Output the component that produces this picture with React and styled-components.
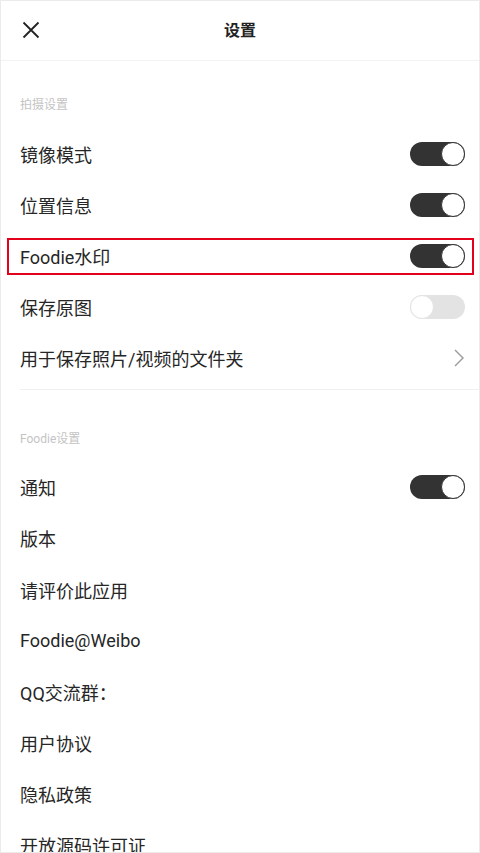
import React, {useState} from "react";
import styled, {createGlobalStyle} from "styled-components";

// settings screen: two groups of rows, toggles on the right

const GlobalStyle = createGlobalStyle`
    html, body {
        margin: 0;
        padding: 0;
        background: #fff;
    }
    * {
        box-sizing: border-box;
    }
`

const shootRows = [
    {label: "镜像模式", type: "toggle", on: true},
    {label: "位置信息", type: "toggle", on: true},
    {label: "Foodie水印", type: "toggle", on: true, marked: true},
    {label: "保存原图", type: "toggle", on: false},
    {label: "用于保存照片/视频的文件夹", type: "link"},
]

const appRows = [
    {label: "通知", type: "toggle", on: true},
    {label: "版本"},
    {label: "请评价此应用"},
    {label: "Foodie@Weibo"},
    {label: "QQ交流群："},
    {label: "用户协议"},
    {label: "隐私政策"},
    {label: "开放源码许可证"},
]

function Toggle({initial}) {
    const [on, setOn] = useState(initial);
    return (
        <Track $on={on} onClick={() => setOn(!on)}>
            <Knob $on={on} />
        </Track>
    );
}

function SettingRow({row}) {
    return (
        <Row $marked={row.marked}>
            <RowLabel>{row.label}</RowLabel>
            {row.type === "toggle" && <Toggle initial={row.on} />}
            {row.type === "link" && (
                <svg width="12" height="20" viewBox="0 0 12 20" fill="none">
                    <path d="M2 2 L10 10 L2 18" stroke="#9a9a9a" strokeWidth="1.4" />
                </svg>
            )}
        </Row>
    );
}

function App() {
    return (
        <Frame>
            <GlobalStyle />
            <Header>
                <CloseButton aria-label="close">
                    <svg width="18" height="18" viewBox="0 0 18 18">
                        <path d="M1.5 1.5 L16.5 16.5 M16.5 1.5 L1.5 16.5" stroke="#222" strokeWidth="1.8" />
                    </svg>
                </CloseButton>
                <Title>设置</Title>
            </Header>

            <SectionLabel>拍摄设置</SectionLabel>
            {shootRows.map(row => <SettingRow key={row.label} row={row} />)}

            <Divider />

            <SectionLabel>Foodie设置</SectionLabel>
            {appRows.map(row => <SettingRow key={row.label} row={row} />)}
        </Frame>
    );
}

const Frame = styled.div`
    width: 480px;
    height: 853px;
    overflow: hidden;
    border: 1px solid #ebebeb;
    background: #fff;
    font-family: Roboto, "Noto Sans CJK SC", sans-serif;
    color: #262626;
`
const Header = styled.div`
    position: relative;
    height: 60px;
    padding-bottom: 3px;
    display: flex;
    align-items: center;
    justify-content: center;
    border-bottom: 1px solid #f3f3f3;
`
const CloseButton = styled.button`
    position: absolute;
    left: 21px;
    top: 20px;
    padding: 0;
    border: 0;
    background: none;
    display: flex;
`
const Title = styled.div`
    font-size: 16px;
    font-weight: 700;
    color: #222;
`
const SectionLabel = styled.div`
    padding: 36px 19px 15px;
    height: 67px;
    line-height: 16px;
    font-size: 12px;
    color: #c4c4c4;
`
const Row = styled.div`
    position: relative;
    height: 51.15px;
    display: flex;
    align-items: center;
    justify-content: space-between;
    padding: 0 14px 0 19px;

    &::after {
        content: "";
        display: ${p => p.$marked ? "block" : "none"};
        position: absolute;
        left: 6px;
        right: 5px;
        top: 8px;
        bottom: 6px;
        border: 2px solid #e3001b;
        pointer-events: none;
    }
`
const RowLabel = styled.div`
    font-size: 18px;
    color: #262626;
`
const Track = styled.div`
    position: relative;
    width: 55px;
    height: 24px;
    border-radius: 12px;
    background: ${p => p.$on ? "#333333" : "#e3e3e3"};
    cursor: pointer;
`
const Knob = styled.div`
    position: absolute;
    top: 0;
    left: ${p => p.$on ? "31px" : "0"};
    width: 24px;
    height: 24px;
    border-radius: 50%;
    background: #fff;
    border: 1.5px solid ${p => p.$on ? "#333333" : "#e3e3e3"};
`
const Divider = styled.div`
    height: 1px;
    margin: 5px 0 5px 19px;
    background: #f0f0f0;
`

export default App;
